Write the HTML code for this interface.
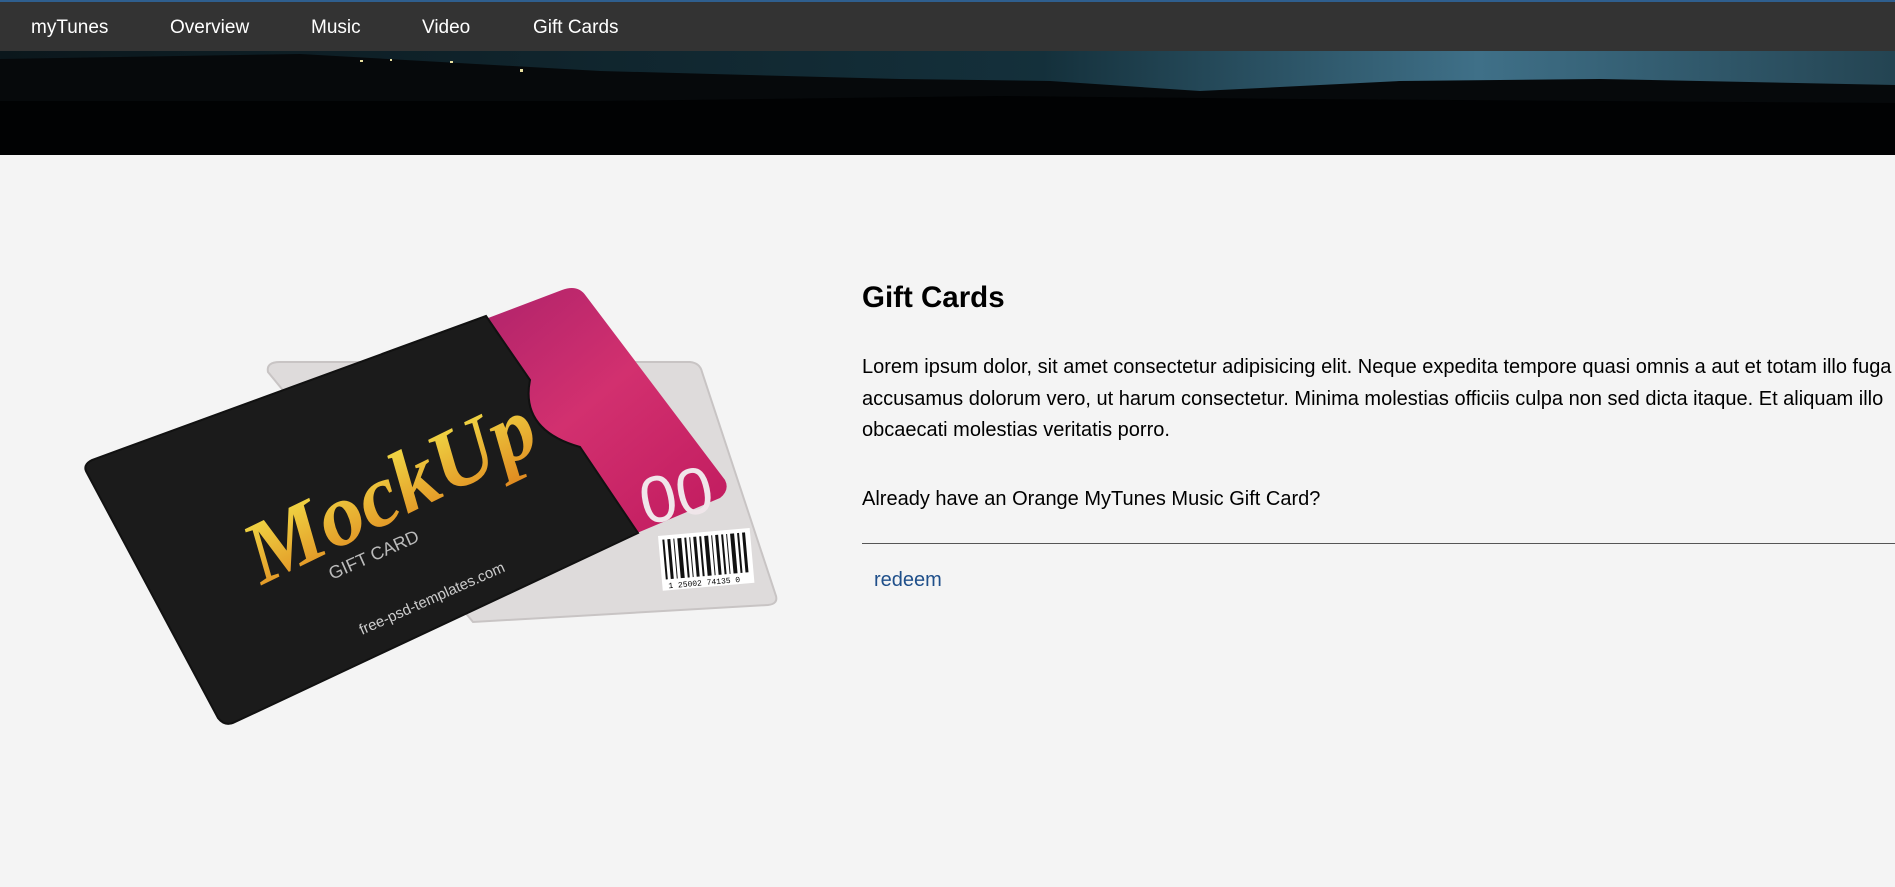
<!DOCTYPE html>
<html><head><meta charset="utf-8"><style>
*{margin:0;padding:0;box-sizing:border-box}
html,body{width:1895px;height:887px;overflow:hidden;background:#f4f4f4;font-family:"Liberation Sans",Arial,sans-serif}
.nav{position:absolute;top:0;left:0;width:1895px;height:51px;background:#333;border-top:2px solid #2f5f8f}
.nav span{position:absolute;top:15px;color:#fff;font-size:19px}
.banner{position:absolute;top:51px;left:0;width:1895px;height:104px;background:#030506}
h1{position:absolute;left:862px;top:281px;font-size:29.5px;font-weight:bold}
.p{position:absolute;left:862px;top:352px;font-size:20px;line-height:31.5px;white-space:nowrap}
.q{position:absolute;left:862px;top:488px;font-size:20px;white-space:nowrap}
.hr{position:absolute;left:862px;top:543px;width:1100px;height:1px;background:#555}
.r{position:absolute;left:874px;top:569px;font-size:20px;color:#1f4f8a}
</style></head><body>
<div class="nav"><span style="left:31px">myTunes</span><span style="left:170px">Overview</span><span style="left:311px">Music</span><span style="left:422px">Video</span><span style="left:533px">Gift Cards</span></div>
<div class="banner">
<svg width="1895" height="104" style="position:absolute;left:0;top:0">
<defs><linearGradient id="sky" x1="0" x2="1"><stop offset="0" stop-color="#0b171c"/><stop offset=".55" stop-color="#14303b"/><stop offset=".78" stop-color="#3f7088"/><stop offset="1" stop-color="#244452"/></linearGradient></defs>
<rect width="1895" height="60" fill="url(#sky)"/>
<path d="M0 8 L300 3 L600 20 L900 28 L1050 30 L1200 40 L1400 30 L1600 28 L1895 34 L1895 104 L0 104Z" fill="#06090b"/>
<path d="M0 50 L600 50 L1000 45 L1300 48 L1895 52 L1895 104 L0 104Z" fill="#010203"/>
<g fill="#e8e0a0"><rect x="450" y="10" width="3" height="2"/><rect x="390" y="8" width="2" height="2"/><rect x="520" y="18" width="3" height="3"/><rect x="360" y="9" width="3" height="2"/></g>
</svg></div>
<svg width="800" height="760" style="position:absolute;left:0;top:0" viewBox="0 0 800 760">
<defs>
<linearGradient id="pk" x1="0" y1="0" x2="1" y2="1"><stop offset="0" stop-color="#a8206a"/><stop offset=".5" stop-color="#d2306f"/><stop offset="1" stop-color="#c01a5e"/></linearGradient>
<linearGradient id="gd" x1="0" y1="0" x2="0" y2="1"><stop offset="0" stop-color="#f2e24a"/><stop offset="1" stop-color="#e08a20"/></linearGradient>
</defs>
<path d="M268 372 Q266 362 280 362 L690 362 Q700 363 702 372 L776 596 Q778 604 768 605 L473 622 Z" fill="#dedbdb" stroke="#c8c4c4" stroke-width="2"/>
<path d="M430 340 L562 290 Q578 284 586 296 L725 480 Q730 490 720 498 L630 536 Z" fill="url(#pk)"/>
<text x="0" y="0" transform="translate(645,525) rotate(-12)" font-family="Liberation Sans" font-size="66" fill="#f0e6ea">00</text>
<g transform="translate(658,536) rotate(-5)"><rect width="92" height="55" fill="#fff"/>
<g fill="#111"><rect x="4" y="4" width="2" height="40"/><rect x="9" y="4" width="3" height="40"/><rect x="15" y="4" width="1" height="40"/><rect x="19" y="4" width="4" height="40"/><rect x="26" y="4" width="2" height="40"/><rect x="31" y="4" width="1" height="40"/><rect x="35" y="4" width="3" height="40"/><rect x="41" y="4" width="2" height="40"/><rect x="46" y="4" width="4" height="40"/><rect x="53" y="4" width="1" height="40"/><rect x="57" y="4" width="3" height="40"/><rect x="63" y="4" width="2" height="40"/><rect x="68" y="4" width="1" height="40"/><rect x="72" y="4" width="4" height="40"/><rect x="79" y="4" width="2" height="40"/><rect x="84" y="4" width="3" height="40"/></g>
<text x="6" y="53" font-size="8" font-family="Liberation Mono">1 25002 74135 0</text></g>
<path d="M87 473 Q82 465 92 460 L486 316 L530 380 Q520 430 580 447 L638 533 L235 722 Q225 727 218 718 Z" fill="#1b1b1b" stroke="#111" stroke-width="2"/>
<text transform="translate(262,585) rotate(-26)" font-family="Liberation Serif" font-style="italic" font-weight="bold" font-size="88" fill="url(#gd)">MockUp</text>
<text transform="translate(332,580) rotate(-24)" font-family="Liberation Sans" font-size="18" fill="#bbb">GIFT CARD</text>
<text transform="translate(362,635) rotate(-24)" font-family="Liberation Sans" font-size="15" fill="#ccc">free-psd-templates.com</text>
</svg>
<h1>Gift Cards</h1>
<div class="p">Lorem ipsum dolor, sit amet consectetur adipisicing elit. Neque expedita tempore quasi omnis a aut et totam illo fuga<br>accusamus dolorum vero, ut harum consectetur. Minima molestias officiis culpa non sed dicta itaque. Et aliquam illo<br>obcaecati molestias veritatis porro.</div>
<div class="q">Already have an Orange MyTunes Music Gift Card?</div>
<div class="hr"></div>
<div class="r">redeem</div>
</body></html>
